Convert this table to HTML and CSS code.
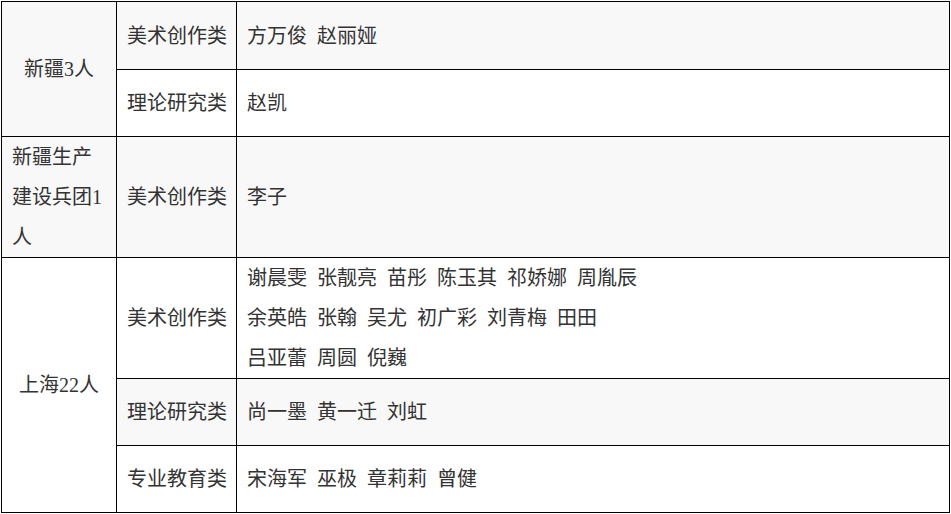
FILE: index.html
```html
<!DOCTYPE html>
<html lang="zh-CN">
<head>
<meta charset="utf-8">
<link rel="stylesheet" href="styles.css">
</head>
<body>
<table class="list">
  <colgroup>
    <col class="c1">
    <col class="c2">
    <col class="c3">
  </colgroup>
  <tbody>
    <tr class="odd first">
      <td class="region" rowspan="2">新疆3人</td>
      <td class="cat">美术创作类</td>
      <td class="names">方万俊&nbsp;&nbsp;赵丽娅</td>
    </tr>
    <tr class="even">
      <td class="cat">理论研究类</td>
      <td class="names">赵凯</td>
    </tr>
    <tr class="odd">
      <td class="region left">新疆生产建设兵团1人</td>
      <td class="cat">美术创作类</td>
      <td class="names">李子</td>
    </tr>
    <tr class="even">
      <td class="region" rowspan="3">上海22人</td>
      <td class="cat">美术创作类</td>
      <td class="names">谢晨雯&nbsp;&nbsp;张靓亮&nbsp;&nbsp;苗彤&nbsp;&nbsp;陈玉其&nbsp;&nbsp;祁娇娜&nbsp;&nbsp;周胤辰<br>余英皓&nbsp;&nbsp;张翰&nbsp;&nbsp;吴尤&nbsp;&nbsp;初广彩&nbsp;&nbsp;刘青梅&nbsp;&nbsp;田田<br>吕亚蕾&nbsp;&nbsp;周圆&nbsp;&nbsp;倪巍</td>
    </tr>
    <tr class="odd">
      <td class="cat">理论研究类</td>
      <td class="names">尚一墨&nbsp;&nbsp;黄一迁&nbsp;&nbsp;刘虹</td>
    </tr>
    <tr class="even">
      <td class="cat">专业教育类</td>
      <td class="names">宋海军&nbsp;&nbsp;巫极&nbsp;&nbsp;章莉莉&nbsp;&nbsp;曾健</td>
    </tr>
  </tbody>
</table>
</body>
</html>
```
FILE: styles.css
```css
html, body {
  margin: 0;
  padding: 0;
  background: #ffffff;
}

body {
  padding: 1px 0 0 1px;
  font-family: "Liberation Serif", "Noto Sans CJK SC", serif;
  font-size: 20px;
  line-height: 40px;
  color: #333333;
}

.list {
  border-collapse: collapse;
  table-layout: fixed;
  width: 948px;
}

.c1 { width: 115px; }
.c2 { width: 120px; }
.c3 { width: 713px; }

.list td {
  border: 1px solid #000000;
  padding: 0 10px;
  height: 66px;
  vertical-align: middle;
  word-break: break-all;
}

.list .first td {
  height: 67px;
}

.odd td {
  background: #f8f8f8;
}

.even td {
  background: #ffffff;
}

.region {
  text-align: center;
}

.region.left {
  text-align: left;
}

.cat {
  text-align: left;
  white-space: nowrap;
}

.names {
  text-align: left;
}
```
